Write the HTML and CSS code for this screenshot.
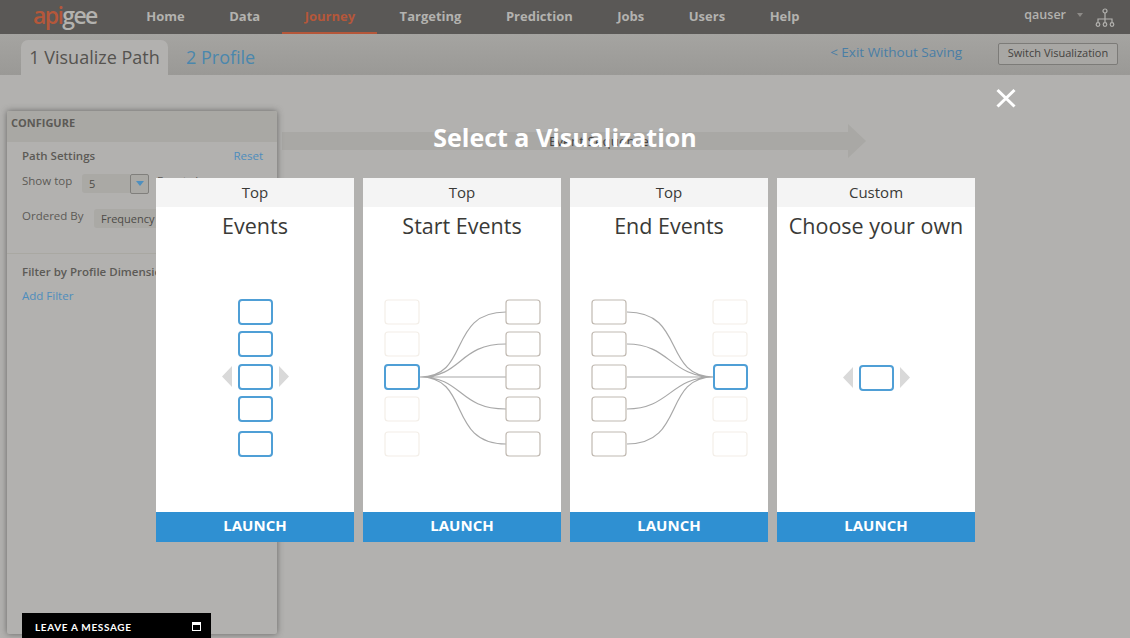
FILE: index.html
```html
<!DOCTYPE html>
<html lang="en">
<head>
<meta charset="utf-8">
<title>Journey</title>
<link rel="stylesheet" href="styles.css">
</head>
<body>
<header class="nav">
  <div class="logo"><span class="logo-o">api</span>gee</div>
  <nav class="menu">
    <a class="m">Home</a>
    <a class="m">Data</a>
    <a class="m m-journey">Journey</a>
    <a class="m">Targeting</a>
    <a class="m">Prediction</a>
    <a class="m">Jobs</a>
    <a class="m">Users</a>
    <a class="m">Help</a>
  </nav>
  <div class="user">
    <span>qauser</span>
    <i class="caret"></i>
    <svg class="org" width="20" height="20" viewBox="0 0 20 20"><g fill="none" stroke="#b3b2af" stroke-width="1.2"><circle cx="10" cy="3" r="2"/><path d="M10 5v6M3 14v-3h14v3M10 11v3"/><circle cx="3" cy="16.500" r="1.800"/><circle cx="10" cy="16.500" r="1.800"/><circle cx="17" cy="16.500" r="1.800"/></g></svg>
  </div>
</header>
<div class="band">
  <div class="tab">1 Visualize Path</div>
  <a class="tab2">2 Profile</a>
  <a class="exit">&lt; Exit Without Saving</a>
  <button class="switch">Switch Visualization</button>
</div>
<main class="stage">
  <aside class="panel">
    <div class="panel-head">CONFIGURE</div>
    <div class="panel-sec">
      <div class="row-between"><b class="sec-title">Path Settings</b><a class="link">Reset</a></div>
      <div class="row-show">
        <span class="lbl">Show top</span>
        <span class="sel sel-top">5</span><span class="sel-btn"><i></i></span>
        <span class="lbl lbl-after">Events by</span>
      </div>
      <div class="row-order">
        <span class="lbl">Ordered By</span>
        <span class="sel sel-order">Frequency</span>
      </div>
    </div>
    <div class="panel-sec2">
      <b class="sec-title">Filter by Profile Dimensions</b>
      <a class="link add">Add Filter</a>
    </div>
    <div class="chat">
      <span>LEAVE A MESSAGE</span><i class="chat-ico"></i>
    </div>
  </aside>
  <div class="flow">
    <div class="flow-bar"><span class="flow-label">Event Sequence</span></div>
    <div class="flow-head"></div>
  </div>
</main>

<section class="modal">
  <h1 class="modal-title">Select a Visualization</h1>
  <svg class="close" width="20" height="20" viewBox="0 0 20 20"><path d="M1.500 2l17 16.500M18.500 2L1.500 18.500" stroke="#fff" stroke-width="3" fill="none"/></svg>
  <div class="cards">
    <article class="card">
      <div class="card-top">Top</div>
      <h2 class="card-title">Events</h2>
      <svg class="art" viewBox="0 0 198 265">
        <rect class="bl" x="83" y="53" width="33" height="24"/>
        <rect class="bl" x="83" y="85" width="33" height="24"/>
        <rect class="bl" x="83" y="118" width="33" height="24"/>
        <rect class="bl" x="83" y="150" width="33" height="24"/>
        <rect class="bl" x="83" y="185" width="33" height="24"/>
        <path class="tri" d="M76 119v21l-10-10.500zM123 119v21l10-10.500z"/>
      </svg>
      <div class="launch">LAUNCH</div>
    </article>
    <article class="card">
      <div class="card-top">Top</div>
      <h2 class="card-title">Start Events</h2>
      <svg class="art" viewBox="0 0 198 265">
        <path class="ln" d="M57 130C108 130 84 65 143 65M57 130C100 130 95 97 143 97M57 130H143M57 130C100 130 95 162 143 162M57 130C108 130 84 197 143 197"/>
        <rect class="fd" x="22" y="53" width="34" height="24"/>
        <rect class="fd" x="22" y="85" width="34" height="24"/>
        <rect class="bl" x="22" y="118" width="34" height="24"/>
        <rect class="fd" x="22" y="150" width="34" height="24"/>
        <rect class="fd" x="22" y="185" width="34" height="24"/>
        <rect class="nt" x="143" y="53" width="34" height="24"/>
        <rect class="nt" x="143" y="85" width="34" height="24"/>
        <rect class="nt" x="143" y="118" width="34" height="24"/>
        <rect class="nt" x="143" y="150" width="34" height="24"/>
        <rect class="nt" x="143" y="185" width="34" height="24"/>
      </svg>
      <div class="launch">LAUNCH</div>
    </article>
    <article class="card">
      <div class="card-top">Top</div>
      <h2 class="card-title">End Events</h2>
      <svg class="art" viewBox="0 0 198 265">
        <path class="ln" d="M57 65C116 65 92 130 144 130M57 97C100 97 100 130 144 130M57 130H144M57 162C100 162 100 130 144 130M57 197C116 197 92 130 144 130"/>
        <rect class="nt" x="22" y="53" width="34" height="24"/>
        <rect class="nt" x="22" y="85" width="34" height="24"/>
        <rect class="nt" x="22" y="118" width="34" height="24"/>
        <rect class="nt" x="22" y="150" width="34" height="24"/>
        <rect class="nt" x="22" y="185" width="34" height="24"/>
        <rect class="fd" x="143" y="53" width="34" height="24"/>
        <rect class="fd" x="143" y="85" width="34" height="24"/>
        <rect class="bl" x="144" y="118" width="33" height="24"/>
        <rect class="fd" x="143" y="150" width="34" height="24"/>
        <rect class="fd" x="143" y="185" width="34" height="24"/>
      </svg>
      <div class="launch">LAUNCH</div>
    </article>
    <article class="card">
      <div class="card-top">Custom</div>
      <h2 class="card-title">Choose your own</h2>
      <svg class="art" viewBox="0 0 198 265">
        <rect class="bl" x="83" y="119" width="33" height="24"/>
        <path class="tri" d="M76 120v21l-10-10.500zM123 120v21l10-10.500z"/>
      </svg>
      <div class="launch">LAUNCH</div>
    </article>
  </div>
</section>
</body>
</html>
```
FILE: styles.css
```css
* { box-sizing: border-box; }
html, body { margin: 0; height: 100%; }
body {
  width: 1130px;
  height: 638px;
  overflow: hidden;
  position: relative;
  background: #b2b1af;
  font-family: "Open Sans", "Liberation Sans", sans-serif;
  color: #55534f;
}
a { display: inline-block; }
b { font-weight: 600; }

.nav {
  height: 34px;
  background: #5a5856;
  display: flex;
  align-items: center;
  padding-left: 33px;
}
.logo {
  width: 91px;
  font-family: "Open Sans", sans-serif;
  font-size: 23px;
  font-weight: 600;
  letter-spacing: -1.600px;
  line-height: 30px;
  color: #b3b2af;
  margin-top: -4px;
}
.logo-o { color: #b5573a; }
.menu { display: flex; height: 34px; }
.m {
  font-size: 13px;
  font-weight: 700;
  color: #b3b2af;
  line-height: 33px;
  height: 34px;
  text-align: center;
  padding: 0 22.250px;
}
.m-journey {
  color: #b5573a;
  border-bottom: 2px solid #b5573a;
}
.user {
  margin-left: auto;
  display: flex;
  align-items: center;
  height: 34px;
  padding-right: 15px;
  font-size: 12.500px;
  font-weight: 600;
  color: #b3b2af;
}
.user span { margin-top: -6px; }
.caret {
  width: 0; height: 0;
  border: 3px solid transparent;
  border-top: 4px solid #8c8a87;
  border-bottom: 0;
  margin: -4px 12px 0 11px;
}
.org { margin-top: 1px; }

.band {
  height: 41px;
  background: linear-gradient(#a5a4a1, #9a9996);
  display: flex;
  align-items: flex-end;
  padding-left: 21px;
  padding-right: 12px;
}
.tab {
  width: 147px;
  height: 35px;
  background: #b2b1af;
  border-radius: 7px 7px 0 0;
  font-size: 18px;
  line-height: 34px;
  text-align: center;
  color: #55534f;
}
.tab2 {
  font-size: 18px;
  line-height: 34px;
  height: 35px;
  margin-left: 18px;
  color: #4a87ad;
}
.exit {
  margin-left: auto;
  margin-right: 36px;
  align-self: flex-start;
  margin-top: 8px;
  font-size: 13.500px;
  line-height: 20px;
  color: #4a7ea6;
}
.switch {
  align-self: flex-start;
  margin-top: 9px;
  width: 120px;
  height: 22px;
  padding: 0 0 2px;
  border: 1px solid #7c7b78;
  border-radius: 2px;
  background: #a8a7a4;
  font: 11px/18px "Open Sans", sans-serif;
  color: #45433f;
}

.stage {
  display: flex;
  padding: 36px 0 0 7px;
  height: 563px;
}
.panel {
  position: relative;
  width: 270px;
  height: 523px;
  background: #b2b1af;
  border-radius: 2px;
  box-shadow: 0 0 6px rgba(60, 60, 58, .65);
}
.panel-head {
  height: 31px;
  background: #a9a8a4;
  padding: 4px 0 0 4px;
  font-size: 11px;
  line-height: 16px;
  font-weight: 700;
  color: #5c5a56;
  border-radius: 2px 2px 0 0;
}
.panel-sec {
  padding: 5px 14px 0 15px;
  height: 80px;
  font-size: 11.500px;
}
.row-between { display: flex; justify-content: space-between; line-height: 17px; }
.sec-title { font-size: 11.500px; color: #5c5a56; }
.link { font-size: 11.500px; color: #4e8dbd; }
.row-show { display: flex; margin-top: 10px; height: 19px; align-items: center; }
.lbl { color: #5c5a56; width: 60px; margin-top: -6px; }
.sel {
  height: 19px;
  background: #aaa9a5;
  border-radius: 3px 0 0 3px;
  font-size: 11px;
  line-height: 19px;
  padding-left: 7px;
  color: #4d4b47;
}
.sel-top { width: 48px; }
.sel-btn {
  width: 19px;
  height: 20px;
  border: 1px solid #807f7c;
  border-radius: 2px;
  background: #aaa9a5;
  display: flex;
  align-items: center;
  justify-content: center;
}
.sel-btn i {
  width: 0; height: 0;
  border: 4px solid transparent;
  border-top: 5px solid #4d8fbf;
  border-bottom: 0;
}
.lbl-after { margin: -6px 0 0 8px; width: auto; }
.row-order { display: flex; margin-top: 16px; height: 19px; align-items: center; }
.row-order .lbl { width: 72px; margin-top: -6px; }
.sel-order { width: 120px; }
.panel-sec2 {
  margin-top: 31px;
  border-top: 1px solid #a9a8a2;
  padding: 9px 0 0 15px;
}
.panel-sec2 .sec-title { display: block; line-height: 17px; }
.add { display: block; margin-top: 7px; line-height: 17px; }
.chat {
  position: absolute;
  left: 15px;
  top: 502px;
  width: 189px;
  height: 25px;
  background: #000;
  color: #fff;
  font-family: "Lato", sans-serif;
  font-size: 10px;
  font-weight: 700;
  letter-spacing: .65px;
  display: flex;
  align-items: center;
  justify-content: space-between;
  padding: 3px 10px 0 13px;
}
.chat-ico {
  width: 9px;
  height: 9px;
  border: 1px solid #fff;
  border-top-width: 3px;
  margin-top: -1px;
}
.flow {
  display: flex;
  align-items: center;
  margin: 12px 0 0 5px;
  height: 35px;
}
.flow-bar {
  width: 566px;
  height: 18px;
  background: #a9a8a5;
  font-size: 13.500px;
  line-height: 19px;
  text-align: center;
  padding-left: 68px;
  color: #45433f;
}
.flow-head {
  width: 0; height: 0;
  border-left: 18px solid #a9a8a5;
  border-top: 17.500px solid transparent;
  border-bottom: 17.500px solid transparent;
}

.modal {
  position: absolute;
  left: 0;
  top: 0;
  width: 1130px;
  height: 638px;
  padding: 118px 0 0 156px;
}
.modal-title {
  margin: 0 0 0 -156px;
  width: 1130px;
  height: 60px;
  text-align: center;
  font-size: 25px;
  line-height: 38px;
  font-weight: 700;
  color: #fff;
}
.close { position: absolute; left: 996px; top: 88px; }
.cards { display: flex; gap: 9px; }
.card {
  width: 198px;
  height: 364px;
  background: #fff;
  display: flex;
  flex-direction: column;
}
.card-top {
  height: 29px;
  background: #f4f4f4;
  text-align: center;
  font-size: 15px;
  line-height: 29px;
  color: #3a3a37;
}
.card-title {
  margin: 0;
  height: 40px;
  text-align: center;
  font-size: 21.500px;
  line-height: 38px;
  font-weight: 400;
  color: #3a3a37;
}
.art { display: block; width: 198px; height: 265px; }
.launch {
  height: 30px;
  background: #2f90d2;
  color: #fff;
  text-align: center;
  font-size: 15px;
  font-weight: 700;
  line-height: 27px;
}
.bl, .fd, .nt { fill: #fff; }
.bl { stroke: #4f9fd6; stroke-width: 2; rx: 3px; }
.fd { stroke: #f3eee8; stroke-width: 1.200; rx: 3px; }
.nt { stroke: #c0b9b1; stroke-width: 1.200; rx: 3px; }
.ln { fill: none; stroke: #a8a8a8; stroke-width: 1.200; }
.tri { fill: #d9d9d9; }
```
